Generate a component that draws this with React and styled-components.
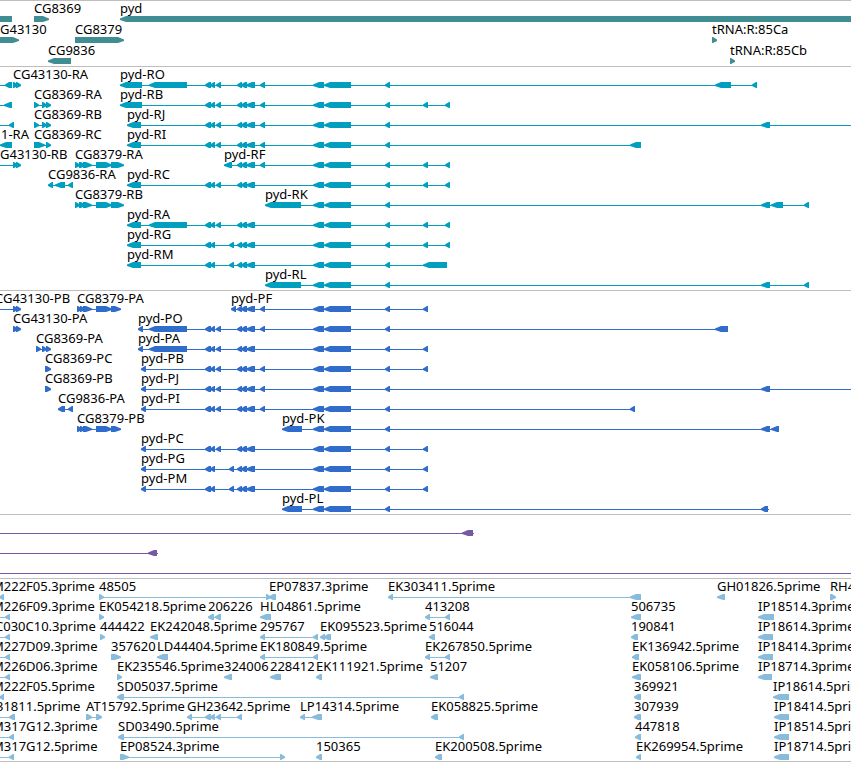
import React from "react";
import styled, { createGlobalStyle } from "styled-components";

const GlobalStyle = createGlobalStyle`
  body {
    margin: 0;
    background: #ffffff;
  }
`;

// exon groups shared by the pyd isoforms, as [start, end]
const MID_PAIR = [[205, 211], [210, 215]];
const MID = [...MID_PAIR, [216, 221]];
const CLUSTER = [[237, 242], [241, 247], [246, 255]];
const CORE = [[313, 324], [324, 351], [385, 390]];
const E229 = [229, 234];
const E260 = [260, 265];
const E423 = [423, 428];
const E445 = [445, 450];
const LONG = [149, 187];
const CG8369 = [[42, 47], [46, 51]];
const CG43130 = [[13, 18], [16, 21]];

const left = (label, x, blocks, from, to) => ({ label, x, blocks, from, to });
const right = (label, x, blocks, from, to) => ({
  label,
  x,
  blocks,
  from,
  to,
  forward: true,
});

const genes = [
  [
    left("", 0, [[-10, 12]]),
    right("CG8369", 34, [[34, 49]]),
    left("pyd", 120, [[120, 4000]]),
  ],
  [
    right("G43130", 0, [[-10, 19]]),
    right("CG8379", 75, [[75, 124]]),
    right("tRNA:R:85Ca", 712, [[712, 717]]),
  ],
  [
    left("CG9836", 48, [[48, 71]]),
    right("tRNA:R:85Cb", 730, [[730, 735]]),
  ],
];

const cg8379R = [[75, 80], [79, 85], [83, 92], [96, 112], [111, 124]];
const cg8379P = [[77, 82], [80, 85], [83, 92], [96, 112], [111, 121]];

const transcripts = [
  [
    left("", 0, [[5, 12]], 0),
    right("CG43130-RA", 13, CG43130),
    left("pyd-RO", 120, [[120, 142], LONG, ...MID, ...CLUSTER, E260, ...CORE, [715, 731], [752, 757]]),
  ],
  [
    left("", 0, [[4, 12]], 0),
    right("CG8369-RA", 34, [[34, 39], ...CG8369]),
    left("pyd-RB", 120, [[120, 142], ...MID, ...CLUSTER, E260, ...CORE, E423, E445]),
  ],
  [
    left("", 0, [[9, 14]], 0),
    right("CG8369-RB", 34, [[34, 39], ...CG8369]),
    left("pyd-RJ", 127, [[127, 141], ...MID, ...CLUSTER, E260, ...CORE, [761, 770]], 127, 4000),
  ],
  [
    left("1-RA", 1, [[0, 12]]),
    right("CG8369-RC", 34, [[34, 45], [46, 51]]),
    left("pyd-RI", 127, [[127, 141], ...MID, ...CLUSTER, E260, ...CORE, [630, 641]]),
  ],
  [
    right("G43130-RB", 0, CG43130, 0),
    right("CG8379-RA", 75, cg8379R),
    left("pyd-RF", 224, [[224, 232], ...CLUSTER, E260, ...CORE, E423, E445]),
  ],
  [
    left("CG9836-RA", 48, [[48, 53], [55, 65], [68, 73]]),
    left("pyd-RC", 127, [[127, 141], ...MID, ...CLUSTER, ...CORE, E423, E445]),
  ],
  [
    right("CG8379-RB", 75, cg8379R),
    left("pyd-RK", 265, [[265, 301], ...CORE, [761, 770], [771, 783], [804, 809]]),
  ],
  [left("pyd-RA", 127, [[127, 141], LONG, ...MID, ...CLUSTER, ...CORE, E423, E445])],
  [left("pyd-RG", 127, [[127, 141], ...MID_PAIR, E229, ...CLUSTER, ...CORE, E423, E445])],
  [left("pyd-RM", 127, [[127, 141], ...MID_PAIR, E229, ...CLUSTER, ...CORE, [423, 447]])],
  [left("pyd-RL", 265, [[265, 301], ...CORE, [761, 770], [804, 809]])],
];

const proteins = [
  [
    right("CG43130-PB", -5, CG43130, 0),
    right("CG8379-PA", 77, cg8379P),
    left("pyd-PF", 231, [[231, 236], ...CLUSTER, E260, ...CORE, E423]),
  ],
  [
    right("CG43130-PA", 13, CG43130),
    left("pyd-PO", 138, [[138, 143], LONG, ...MID, ...CLUSTER, E260, ...CORE, [715, 728]]),
  ],
  [
    right("CG8369-PA", 36, [[36, 41], ...CG8369]),
    left("pyd-PA", 138, [[138, 143], LONG, ...MID, ...CLUSTER, ...CORE, E423]),
  ],
  [
    right("CG8369-PC", 45, [[45, 51]]),
    left("pyd-PB", 141, [[141, 146], ...MID, ...CLUSTER, E260, ...CORE, E423]),
  ],
  [
    right("CG8369-PB", 45, [[45, 51]]),
    left("pyd-PJ", 141, [[141, 146], ...MID, ...CLUSTER, E260, ...CORE, [761, 770]], 141, 4000),
  ],
  [
    left("CG9836-PA", 58, [[58, 65], [68, 73]]),
    left("pyd-PI", 141, [[141, 146], ...MID, ...CLUSTER, E260, ...CORE, [630, 635]]),
  ],
  [
    right("CG8379-PB", 77, cg8379P),
    left("pyd-PK", 282, [[282, 302], ...CORE, [761, 770], [771, 779]]),
  ],
  [left("pyd-PC", 141, [[141, 146], ...MID, ...CLUSTER, ...CORE, E423])],
  [left("pyd-PG", 141, [[141, 146], ...MID_PAIR, E229, ...CLUSTER, ...CORE, E423])],
  [left("pyd-PM", 141, [[141, 146], ...MID_PAIR, E229, ...CLUSTER, ...CORE, E423])],
  [left("pyd-PL", 282, [[282, 302], ...CORE, [761, 768]], 282, 769)],
];

const cdnas = [
  [left("", 0, [[462, 473]], 0, 474)],
  [left("", 0, [[148, 157]], 0, 158)],
  [left("", 0, [], 0, 4000)],
];

const ests = [
  [
    left("M222F05.3prime", -8, [[-1, 4]]),
    right("48505", 99, [[99, 104], [266, 271]]),
    left("EP07837.3prime", 269, [[269, 276]]),
    left("EK303411.5prime", 388, [[388, 393], [630, 641]]),
    left("GH01826.5prime", 717, [[717, 725]]),
    right("RH4", 830, [[830, 836]]),
  ],
  [
    left("M226F09.3prime", -8, [[5, 10]], 0),
    right("EK054218.5prime", 99, [[99, 104]]),
    left("206226", 208, [[208, 214], [215, 221]]),
    left("HL04861.5prime", 260, [[260, 271]]),
    left("413208", 425, [[425, 430], [445, 450]]),
    left("506735", 631, [[631, 641]]),
    left("IP18514.3prime", 758, [[758, 774]]),
  ],
  [
    left("C030C10.3prime", -5, [[5, 10]], 0),
    right("444422", 100, [[100, 105]]),
    left("EK242048.5prime", 150, [[150, 158]]),
    left("295767", 260, [[260, 265], [313, 318]]),
    left("EK095523.5prime", 320, [[320, 325], [324, 331]]),
    left("516044", 429, [[429, 435]]),
    left("190841", 631, [[631, 638]]),
    left("IP18614.3prime", 758, [[758, 773]]),
  ],
  [
    left("M227D09.3prime", -8, [[5, 10]], 0),
    right("357620", 111, [[111, 121]]),
    left("LD44404.5prime", 157, [[157, 168]]),
    left("EK180849.5prime", 260, [[260, 265], [313, 318]]),
    left("EK267850.5prime", 425, [[425, 430], [445, 450]]),
    left("EK136942.5prime", 632, [[632, 639]]),
    left("IP18414.3prime", 758, [[758, 773]]),
  ],
  [
    left("M226D06.3prime", -8, [[5, 10]], 0),
    right("EK235546.5prime", 117, [[117, 122]]),
    left("324006", 224, [[224, 232]]),
    left("228412", 270, [[270, 281]]),
    left("EK111921.5prime", 316, [[316, 322]]),
    left("51207", 430, [[430, 438]]),
    left("EK058106.5prime", 632, [[632, 641]]),
    left("IP18714.3prime", 758, [[758, 772]]),
  ],
  [
    left("M222F05.5prime", -8, [[-1, 4]]),
    left("SD05037.5prime", 117, [[117, 124], [459, 464]]),
    left("369921", 634, [[634, 641]]),
    left("IP18614.5prime", 773, [[773, 789]]),
  ],
  [
    left("31811.5prime", -4, [[9, 15]], 0),
    right("AT15792.5prime", 86, [[86, 92], [96, 102]]),
    left("GH23642.5prime", 187, [[187, 192], ...MID, [237, 242]]),
    left("LP14314.5prime", 300, [[300, 305], [312, 322]]),
    left("EK058825.5prime", 431, [[431, 438]]),
    left("307939", 634, [[634, 641]]),
    left("IP18414.5prime", 774, [[774, 789]]),
  ],
  [
    left("M317G12.3prime", -8, [[9, 14]], 0),
    left("SD03490.5prime", 118, [[118, 124], [459, 464]]),
    left("447818", 635, [[635, 641]]),
    left("IP18514.5prime", 774, [[774, 789]]),
  ],
  [
    left("M317G12.5prime", -8, [[9, 14]], 0),
    right("EP08524.3prime", 120, [[120, 129], [280, 285]]),
    left("150365", 316, [[316, 322]]),
    left("EK200508.5prime", 435, [[435, 442]]),
    left("EK269954.5prime", 636, [[636, 641]]),
    left("IP18714.5prime", 774, [[774, 789]]),
  ],
];

// blunt-tipped block, the head is at most 6px long
const arrow = ([a, b], forward) => {
  const head = b - a > 7 ? 6 : 4;
  return forward
    ? `${b},2.5 ${b - head},0 ${a},0 ${a},6 ${b - head},6 ${b},4`
    : `${a},2.5 ${a + head},0 ${b},0 ${b},6 ${a + head},6 ${a},4`;
};

const Feature = ({ blocks, forward, from, to }) => {
  const start = from ?? blocks[0][0];
  const end = to ?? blocks[blocks.length - 1][1];
  return (
    <g>
      {(blocks.length !== 1 || from !== undefined) && (
        <rect x={start} y="3" width={end - start} height="1" />
      )}
      {blocks.map((block) => (
        <polygon key={block[0]} points={arrow(block, forward)} />
      ))}
    </g>
  );
};

const Track = ({ name, rows, color, rowHeight = 20, top = 1, bottom = 2 }) => (
  <TrackPanel aria-label={name} $top={top} $bottom={bottom}>
    {rows.map((features, i) => (
      <Row key={i} $height={rowHeight}>
        {features
          .filter((f) => f.label)
          .map((f) => (
            <Label key={f.label} style={{ left: f.x }}>
              {f.label}
            </Label>
          ))}
        <Glyphs $color={color} aria-hidden="true">
          {features.map((f) => (
            <Feature key={f.label + f.x} {...f} />
          ))}
        </Glyphs>
      </Row>
    ))}
  </TrackPanel>
);

const App = () => (
  <>
    <GlobalStyle />
    <Browser>
      <Track name="Genes" rows={genes} color="#408e94" rowHeight={21} top={0} />
      <Track name="Transcripts" rows={transcripts} color="#009fc0" />
      <Track name="Proteins" rows={proteins} color="#306ccc" />
      <Track name="cDNAs" rows={cdnas} color="#7558a6" />
      <Track name="ESTs" rows={ests} color="#87bcdd" bottom={1} />
    </Browser>
  </>
);

const Browser = styled.main`
  overflow: hidden;
  border-bottom: 1px solid #bebebe;
  color: #000000;
  font-family: "Noto Sans", "Open Sans", sans-serif;
  font-size: 13px;
  line-height: 12px;
`;

const TrackPanel = styled.section`
  border-top: 1px solid #bebebe;
  padding: ${(p) => p.$top}px 0 ${(p) => p.$bottom}px;
`;

const Row = styled.div`
  position: relative;
  display: flex;
  align-items: flex-end;
  height: ${(p) => p.$height}px;
`;

// labels sit over the row at their genomic position
const Label = styled.span`
  position: absolute;
  bottom: 8px;
  white-space: nowrap;
`;

const Glyphs = styled.svg`
  display: block;
  width: 100%;
  height: 6px;
  fill: ${(p) => p.$color};
`;

export default App;
